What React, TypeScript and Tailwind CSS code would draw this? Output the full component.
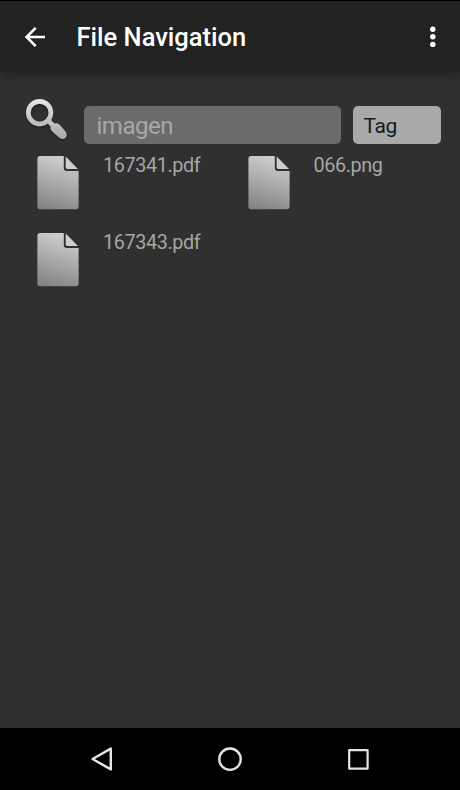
function BackArrow() {
  return (
    <svg width="24" height="24" viewBox="0 0 24 24" fill="none" stroke="#fff" strokeWidth="2.6">
      <path d="M22 12H4.5M12.7 2.9L3.6 12L12.7 21.1" />
    </svg>
  );
}

function MagnifierIcon() {
  return (
    <svg className="block shrink-0" width="46" height="46" viewBox="0 0 46 46">
      <defs>
        <linearGradient id="lens" x1="0" y1="0" x2="0" y2="1">
          <stop offset="0" stopColor="#e4e4e4" />
          <stop offset="1" stopColor="#bcbcbc" />
        </linearGradient>
        <linearGradient id="handle" x1="0" y1="0" x2="0" y2="1">
          <stop offset="0" stopColor="#c8c8c8" />
          <stop offset="1" stopColor="#a6a6a6" />
        </linearGradient>
        <filter id="drop" x="-20%" y="-20%" width="140%" height="150%">
          <feDropShadow dx="0" dy="1" stdDeviation="0.8" floodColor="#000" floodOpacity="0.6" />
        </filter>
      </defs>
      <g filter="url(#drop)">
        <path
          d="M24 24.5L27.5 21.5L31.4 25.4Q34.4 24.8 36.4 26.6L42.6 33.8Q45 37.2 42.4 39.9Q39.6 42.2 36.4 39.8L29 33.2Q27 31.2 27.6 28.4Z"
          fill="url(#handle)"
        />
        <circle cx="16.6" cy="14.7" r="11.3" fill="none" stroke="url(#lens)" strokeWidth="4.6" />
      </g>
    </svg>
  );
}

function FileIcon() {
  return (
    <svg className="block shrink-0" width="42" height="54" viewBox="0 0 42 54">
      <defs>
        <linearGradient id="page" gradientUnits="userSpaceOnUse" x1="29" y1="0" x2="12" y2="54">
          <stop offset="0" stopColor="#d2d2d2" />
          <stop offset="1" stopColor="#838383" />
        </linearGradient>
      </defs>
      <path
        d="M3.2 0H26.8V12Q26.8 14.9 29.8 14.9H41.6V50.5Q41.6 53.2 39 53.2H3Q.4 53.2 .4 50.5V2.8Q.4 0 3.2 0Z"
        fill="url(#page)"
      />
      <path d="M28.7 .5L41 12.9H30.3Q28.7 12.9 28.7 11.3Z" fill="#cecece" />
    </svg>
  );
}

function FileEntry({ name }: { name: string }) {
  return (
    <div className="flex h-[77px] w-[210.5px] items-start">
      <FileIcon />
      <span className="ml-[24px] -mt-[2px] text-[19.8px] leading-6 tracking-[-0.38px] text-[#a6a6a6]">{name}</span>
    </div>
  );
}

export default function App() {
  return (
    <div className="flex h-[790px] w-[460px] flex-col overflow-hidden bg-[#303030] font-['Roboto',sans-serif]">
      <header className="flex h-[72px] shrink-0 items-center border-t border-black bg-[#222222] pl-[23px] pr-[15px] shadow-[0_3px_9px_rgba(0,0,0,0.3)]">
        <button aria-label="Back"><BackArrow /></button>
        <h1 className="ml-[29.5px] whitespace-nowrap text-[25.5px] font-medium leading-8 text-white">File Navigation</h1>
        <button aria-label="More options" className="ml-auto">
          <svg width="24" height="24" viewBox="0 0 24 24" fill="#fff">
            <circle cx="11.8" cy="4.2" r="2.7" />
            <circle cx="11.8" cy="11.8" r="2.7" />
            <circle cx="11.8" cy="19.4" r="2.7" />
          </svg>
        </button>
      </header>

      <main className="flex-1 pt-[26px]">
        <div className="flex h-[46px] pl-[23px]">
          <MagnifierIcon />
          <div className="ml-[15px] mt-2 flex h-[38px] w-[256.5px] items-center rounded-[5px] bg-[#6b6b6b] pl-[12.5px] pt-[2px] text-[24px] leading-8 tracking-[-0.5px] text-[#a8a8a8]">
            imagen
          </div>
          <div className="ml-[12.5px] mt-2 flex h-[38px] w-[87.5px] items-center rounded-[5px] bg-[#a9a9a9] pl-[10.5px] pt-[2px] text-[21px] leading-7 tracking-[-0.4px] text-[#191919]">
            Tag
          </div>
        </div>
        <div className="mt-3 flex flex-wrap pl-[37px]">
          <FileEntry name="167341.pdf" />
          <FileEntry name="066.png" />
          <FileEntry name="167343.pdf" />
        </div>
      </main>

      <nav className="flex h-[62px] shrink-0 items-center justify-between bg-black px-[88px]">
        <svg width="28" height="28" viewBox="0 0 28 28" fill="none" stroke="#e6e6e6" strokeWidth="2.4" strokeLinejoin="round">
          <path d="M22.8 3.6V24.4L4.6 14Z" />
        </svg>
        <svg width="28" height="28" viewBox="0 0 28 28" fill="none" stroke="#e6e6e6" strokeWidth="2.4">
          <circle cx="14" cy="14.2" r="10.7" />
        </svg>
        <svg width="28" height="28" viewBox="0 0 28 28" fill="none" stroke="#e6e6e6" strokeWidth="2.2" strokeLinejoin="round">
          <rect x="5.2" y="5.2" width="18.4" height="18.4" />
        </svg>
      </nav>
    </div>
  );
}
